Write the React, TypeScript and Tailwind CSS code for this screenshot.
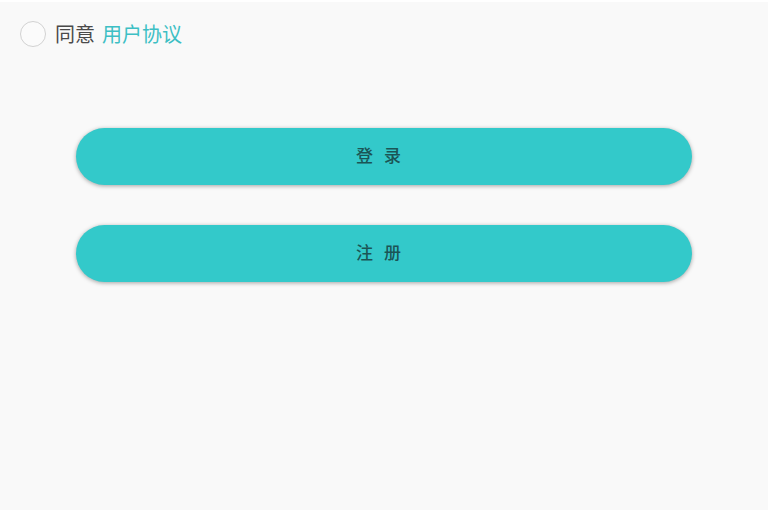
import React, { useState } from "react";

export default function App() {
  const [agreed, setAgreed] = useState(false);

  return (
    <div
      className="min-h-[510px] w-full bg-[#f9f9f9] border-t-2 border-white"
      style={{ fontFamily: '"Noto Sans CJK SC", "Noto Sans", sans-serif' }}
    >
      {/* Agreement row */}
      <div className="flex items-center pl-[20px] pt-[19px]">
        <button
          onClick={() => setAgreed(!agreed)}
          className={`w-[26px] h-[26px] rounded-full border-[1.5px] ${
            agreed ? "border-[#33c9ca] bg-[#33c9ca]" : "border-[#d2d2d2] bg-[#fbfbfb]"
          }`}
        />
        <span className="ml-[9px] text-[20px] leading-[26px] text-[#4a4a4a]">同意</span>
        <a className="ml-[7px] text-[20px] leading-[26px] text-[#3dbfc4]">用户协议</a>
      </div>

      {/* Buttons */}
      <div className="flex flex-col gap-[40px] mx-[76px] mt-[81px]">
        <button className="h-[57px] w-full rounded-full bg-[#33c9ca] shadow-[0_1px_4px_rgba(0,0,0,0.35)] pb-[4px] text-[17px] font-medium tracking-[11px] text-[#1b5556]">
          登录
        </button>
        <button className="h-[57px] w-full rounded-full bg-[#33c9ca] shadow-[0_1px_4px_rgba(0,0,0,0.35)] pb-[4px] text-[17px] font-medium tracking-[11px] text-[#1b5556]">
          注册
        </button>
      </div>
    </div>
  );
}
